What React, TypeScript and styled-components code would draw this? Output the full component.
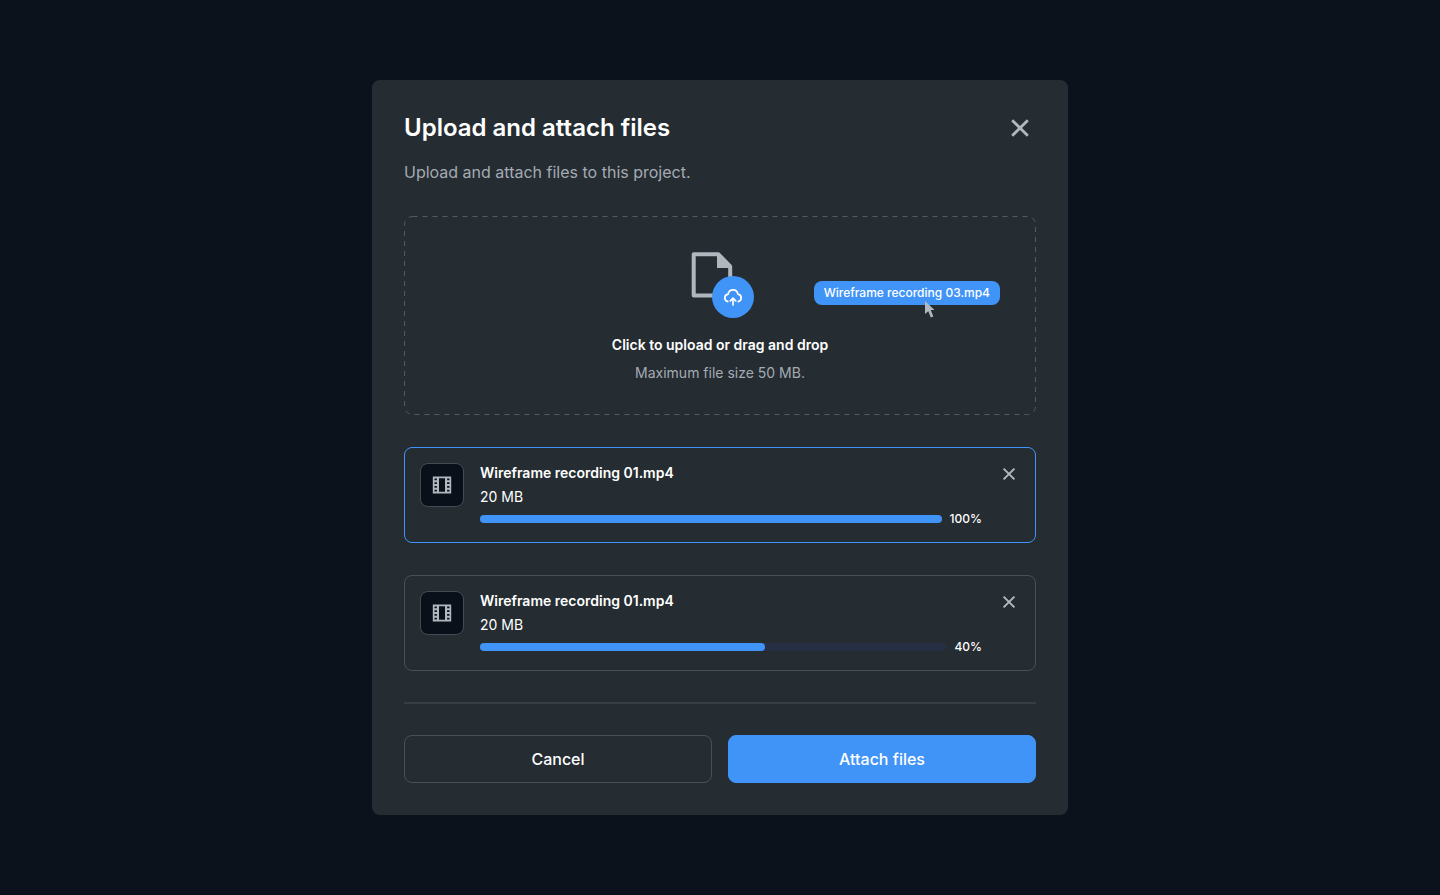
import React, { useState } from "react";
import styled, { createGlobalStyle } from "styled-components";

const GlobalStyle = createGlobalStyle`
  *, *::before, *::after { box-sizing: border-box; }
  body {
    margin: 0;
    background: #0c121c;
    color: #ffffff;
    font-family: Inter, "Liberation Sans", sans-serif;
  }
  h1, p, ul { margin: 0; padding: 0; }
  button { font-family: inherit; cursor: pointer; }
`;

const Page = styled.main`
  min-height: 100vh;
  display: flex;
  align-items: center;
  justify-content: center;
  padding: 32px;
`;

const Dialog = styled.section`
  width: 100%;
  max-width: 696px;
  padding: 32px;
  border-radius: 8px;
  background: #252c32;
`;

const Header = styled.header`
  display: flex;
  align-items: center;
  justify-content: space-between;
`;

const Title = styled.h1`
  font-size: 24px;
  line-height: 32px;
  font-weight: 600;
`;

const Subtitle = styled.p`
  margin-top: 16px;
  font-size: 16px;
  line-height: 24px;
  color: #a4abb2;
`;

const IconButton = styled.button<{ $size: number }>`
  display: flex;
  flex: none;
  width: ${(p) => p.$size}px;
  height: ${(p) => p.$size}px;
  padding: 0;
  border: 0;
  background: none;
  color: #b0b7be;
`;

const DropZone = styled.div`
  position: relative;
  margin-top: 32px;
`;

const DashedOutline = styled.svg`
  position: absolute;
  inset: 0;
  width: 100%;
  height: 100%;
  pointer-events: none;
`;

const DropTarget = styled.button`
  display: flex;
  flex-direction: column;
  align-items: center;
  width: 100%;
  padding: 32px;
  border: 0;
  background: none;
  color: #ffffff;
`;

const DropTitle = styled.span`
  margin-top: 15px;
  font-size: 14px;
  line-height: 20px;
  font-weight: 600;
`;

const DropHint = styled.span`
  margin-top: 8px;
  font-size: 14px;
  line-height: 20px;
  color: #a4abb2;
`;

const DragGhost = styled.div`
  position: absolute;
  top: 65px;
  right: 36px;
  padding: 0 10px;
  border-radius: 8px;
  background: #4094f7;
  font-size: 12px;
  line-height: 24px;
  font-weight: 500;
  pointer-events: none;
`;

const Pointer = styled.svg`
  position: absolute;
  top: 19px;
  left: 110px;
`;

const FileList = styled.ul`
  display: flex;
  flex-direction: column;
  gap: 32px;
  margin-top: 32px;
  list-style: none;
`;

const FileCard = styled.li<{ $active: boolean }>`
  display: flex;
  align-items: flex-start;
  gap: 16px;
  padding: 15px;
  border: 1px solid ${(p) => (p.$active ? "#4094f7" : "#495057")};
  border-radius: 8px;
`;

const Thumb = styled.div`
  display: flex;
  align-items: center;
  justify-content: center;
  flex: none;
  width: 44px;
  height: 44px;
  border: 1px solid #434b53;
  border-radius: 8px;
  background: #0a1019;
`;

const FileInfo = styled.div`
  flex: 1;
  min-width: 0;
`;

const FileName = styled.p`
  font-size: 14px;
  line-height: 20px;
  font-weight: 600;
`;

const FileSize = styled.p`
  margin-top: 4px;
  font-size: 14px;
  line-height: 20px;
`;

const ProgressRow = styled.div`
  display: flex;
  align-items: center;
  gap: 8px;
  margin-top: 4px;
`;

const Track = styled.div`
  flex: 1;
  height: 8px;
  border-radius: 4px;
  background: #272f45;
`;

const Bar = styled.div`
  height: 8px;
  border-radius: 4px;
  background: #4094f7;
`;

const Percent = styled.span`
  font-size: 12px;
  line-height: 16px;
  font-weight: 500;
`;

const RemoveSlot = styled.div`
  padding: 1px 1px 0;
`;

const Footer = styled.footer`
  display: grid;
  grid-template-columns: 1fr 1fr;
  gap: 16px;
  margin-top: 31px;
  padding-top: 31px;
  border-top: 2px solid #373f46;
`;

const ActionButton = styled.button<{ $primary?: boolean }>`
  height: 48px;
  border: 1px solid ${(p) => (p.$primary ? "#4094f7" : "#495057")};
  border-radius: 8px;
  background: ${(p) => (p.$primary ? "#4094f7" : "transparent")};
  color: #ffffff;
  font-size: 16px;
  line-height: 24px;
  font-weight: 500;
`;

const CloseIcon = ({ size, reach, stroke }: { size: number; reach: number; stroke: number }) => {
  const a = size / 2 - reach;
  const b = size / 2 + reach;
  return (
    <svg width={size} height={size} viewBox={`0 0 ${size} ${size}`} fill="none" aria-hidden="true">
      <path d={`M${a} ${a}L${b} ${b}M${b} ${a}L${a} ${b}`} stroke="currentColor" strokeWidth={stroke} />
    </svg>
  );
};

const FilmIcon = () => (
  <svg width="20" height="18" viewBox="0 0 20 18" aria-hidden="true">
    <path
      fill="#b0b7be"
      fillRule="evenodd"
      d="M.8 .5H19.200V17.500H.8ZM7 2.200V15.800H13V2.200ZM2.500 2.400V4.200H4.900V2.400ZM2.500 6.200V8H4.900V6.200ZM2.500 10V11.800H4.900V10ZM2.500 13.800V15.600H4.900V13.800ZM15.100 2.400V4.200H17.500V2.400ZM15.100 6.200V8H17.500V6.200ZM15.100 10V11.800H17.500V10ZM15.100 13.800V15.600H17.500V13.800Z"
    />
  </svg>
);

const UploadArt = () => (
  <svg width="72" height="72" viewBox="0 0 72 72" fill="none" aria-hidden="true">
    <path d="M30 47.500H9.700V6.300H34.500L46.200 18.500V30" stroke="#b0b7be" strokeWidth="4" strokeLinejoin="round" />
    <path d="M33 6H35L47 18V20H33Z" fill="#b0b7be" />
    <circle cx="49" cy="49" r="21" fill="#4094f7" />
    <path
      d="M43.800 53.600C41.900 53.100 40.800 51.700 40.800 50C40.800 48.100 42.200 46.500 44.100 46.200C44.500 43.600 46.500 41.800 49 41.800C51.500 41.800 53.500 43.600 53.900 46.200C55.800 46.500 57.200 48.100 57.200 50C57.200 51.700 56.100 53.100 54.200 53.600M49 57V50.500M46.300 52.800L49 50.100L51.700 52.800"
      stroke="#ffffff"
      strokeWidth="1.700"
      strokeLinecap="round"
      strokeLinejoin="round"
    />
  </svg>
);

const initialFiles = [
  { id: 1, name: "Wireframe recording 01.mp4", size: "20 MB", percent: 100, fill: 100 },
  { id: 2, name: "Wireframe recording 01.mp4", size: "20 MB", percent: 40, fill: 61 },
];

export default function App() {
  const [files, setFiles] = useState(initialFiles);
  return (
    <>
      <GlobalStyle />
      <Page>
        <Dialog role="dialog" aria-labelledby="dialog-title">
          <Header>
            <Title id="dialog-title">Upload and attach files</Title>
            <IconButton type="button" $size={32} aria-label="Close">
              <CloseIcon size={32} reach={7.8} stroke={2.8} />
            </IconButton>
          </Header>
          <Subtitle>Upload and attach files to this project.</Subtitle>

          <DropZone>
            <DashedOutline aria-hidden="true">
              <rect x="0.5" y="0.5" rx="8" style={{ width: "calc(100% - 1px)", height: "calc(100% - 1px)" }} fill="none" stroke="#535b62" strokeDasharray="5 5" />
            </DashedOutline>
            <DropTarget type="button">
              <UploadArt />
              <DropTitle>Click to upload or drag and drop</DropTitle>
              <DropHint>Maximum file size 50 MB.</DropHint>
            </DropTarget>
            <DragGhost>
              Wireframe recording 03.mp4
              <Pointer width="12" height="19" viewBox="0 0 12 19" aria-hidden="true">
                <path d="M1 1L10.500 10H6.800L9.300 16.500L6.800 17.500L4.300 11.200L1 14Z" fill="#b0b7be" />
              </Pointer>
            </DragGhost>
          </DropZone>

          <FileList>
            {files.map((file) => (
              <FileCard key={file.id} $active={file.percent === 100}>
                <Thumb>
                  <FilmIcon />
                </Thumb>
                <FileInfo>
                  <FileName>{file.name}</FileName>
                  <FileSize>{file.size}</FileSize>
                  <ProgressRow>
                    <Track role="progressbar" aria-label={file.name} aria-valuenow={file.percent}>
                      <Bar style={{ width: `${file.fill}%` }} />
                    </Track>
                    <Percent>{file.percent}%</Percent>
                  </ProgressRow>
                </FileInfo>
                <RemoveSlot>
                  <IconButton
                    type="button"
                    $size={20}
                    aria-label={`Remove ${file.name}`}
                    onClick={() => setFiles(files.filter((f) => f.id !== file.id))}
                  >
                    <CloseIcon size={20} reach={5.4} stroke={2} />
                  </IconButton>
                </RemoveSlot>
              </FileCard>
            ))}
          </FileList>

          <Footer>
            <ActionButton type="button">Cancel</ActionButton>
            <ActionButton type="button" $primary>
              Attach files
            </ActionButton>
          </Footer>
        </Dialog>
      </Page>
    </>
  );
}
